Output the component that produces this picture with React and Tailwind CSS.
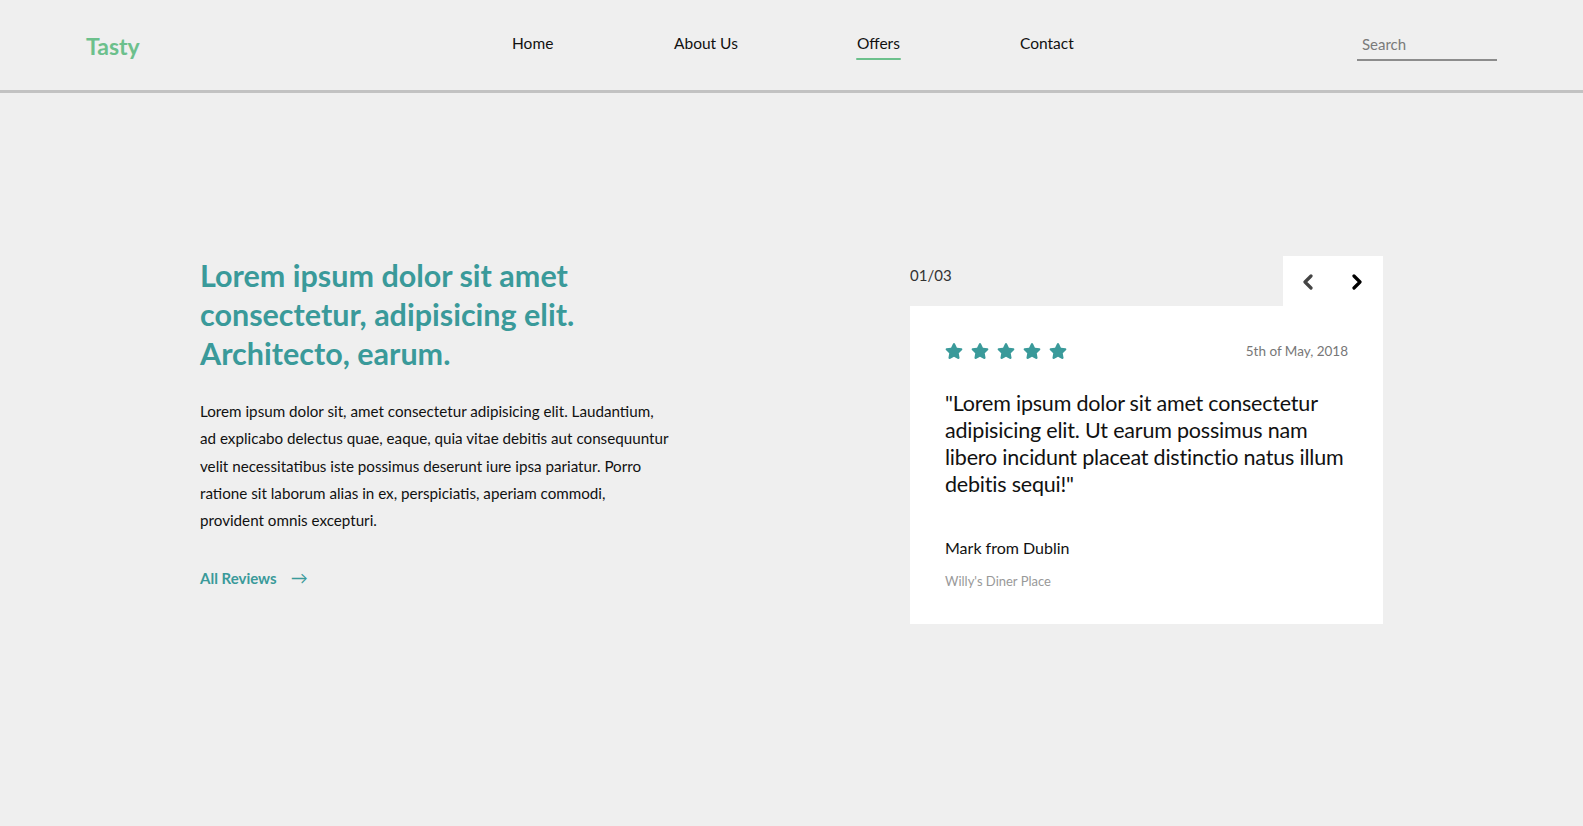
import { FaStar } from 'react-icons/fa';

function Chevron({ dir, className }) {
  return (
    <svg width="12" height="16" viewBox="0 0 12 16" className={className}>
      <polyline
        points={dir === 'left' ? '9,2 3,8 9,14' : '3,2 9,8 3,14'}
        fill="none"
        stroke="currentColor"
        strokeWidth="3.2"
        strokeLinecap="round"
        strokeLinejoin="round"
      />
    </svg>
  );
}

export default function App() {
  return (
    <div className="min-h-screen bg-[#efefef] font-['Lato','Open_Sans',sans-serif] text-[#111]">
      <header className="h-[93px] border-b-[3px] border-[#c2c2c2] flex items-center px-[86px]">
        <div className="w-[426px] text-[23px] font-bold text-[#6cc08c] mt-[2px]">Tasty</div>
        <nav className="flex -mt-[2px]">
          <a className="w-[162px] text-[15.5px] text-[#111]">Home</a>
          <a className="w-[183px] text-[15.5px] text-[#111]">About Us</a>
          <a className="w-[163px] text-[15.5px] text-[#111]">
            <span className="relative inline-block">
              Offers
              <span className="absolute -left-[1px] -right-[1px] -bottom-[4px] h-[2px] bg-[#6cc08c] rounded-full" />
            </span>
          </a>
          <a className="text-[15.5px] text-[#111]">Contact</a>
        </nav>
        <div className="ml-auto mt-[3px]">
          <input
            className="w-[140px] bg-transparent border-b-2 border-[#8c8c8c] pl-[5px] pb-[4px] text-[15px] outline-none placeholder-[#7a7a7a]"
            placeholder="Search"
          />
        </div>
      </header>

      <main className="w-[1183px] mx-auto pt-[163px] flex justify-between">
        <section className="w-[480px]">
          <h1 className="text-[30.5px] leading-[39px] font-bold text-[#3a9a9a]">
            Lorem ipsum dolor sit amet
            <br />
            consectetur, adipisicing elit.
            <br />
            Architecto, earum.
          </h1>
          <p className="mt-[25px] text-[15.2px] leading-[27.3px] text-[#111]">
            Lorem ipsum dolor sit, amet consectetur adipisicing elit. Laudantium,
            <br />
            ad explicabo delectus quae, eaque, quia vitae debitis aut consequuntur
            <br />
            velit necessitatibus iste possimus deserunt iure ipsa pariatur. Porro
            <br />
            ratione sit laborum alias in ex, perspiciatis, aperiam commodi,
            <br />
            provident omnis excepturi.
          </p>
          <a className="mt-[31px] flex items-center gap-[14px] text-[15px] font-bold text-[#3a9a9a]">
            All Reviews <span className="text-[17px] font-normal">→</span>
          </a>
        </section>

        <section className="w-[473px]">
          <div className="flex h-[50px]">
            <div className="flex-1 pt-[8px] text-[15px] text-[#333]">01/03</div>
            <div className="w-[100px] bg-white flex items-center justify-between pl-[19px] pr-[20px] pt-[2px]">
              <Chevron dir="left" className="text-[#444]" />
              <Chevron dir="right" className="text-black" />
            </div>
          </div>
          <div className="bg-white px-[35px] pt-[35px] pb-[32px]">
            <div className="flex items-center justify-between">
              <div className="flex gap-[8px] text-[#3a9a9a] text-[18px]">
                <FaStar />
                <FaStar />
                <FaStar />
                <FaStar />
                <FaStar />
              </div>
              <span className="text-[13.5px] text-[#777]">5th of May, 2018</span>
            </div>
            <p className="mt-[29px] text-[21.5px] leading-[27px] text-[#111] tracking-[-0.2px]">
              "Lorem ipsum dolor sit amet consectetur
              <br />
              adipisicing elit. Ut earum possimus nam
              <br />
              libero incidunt placeat distinctio natus illum
              <br />
              debitis sequi!"
            </p>
            <div className="mt-[38px] text-[16px] text-[#111]">Mark from Dublin</div>
            <div className="mt-[12px] text-[13px] text-[#999]">Willy's Diner Place</div>
          </div>
        </section>
      </main>
    </div>
  );
}
